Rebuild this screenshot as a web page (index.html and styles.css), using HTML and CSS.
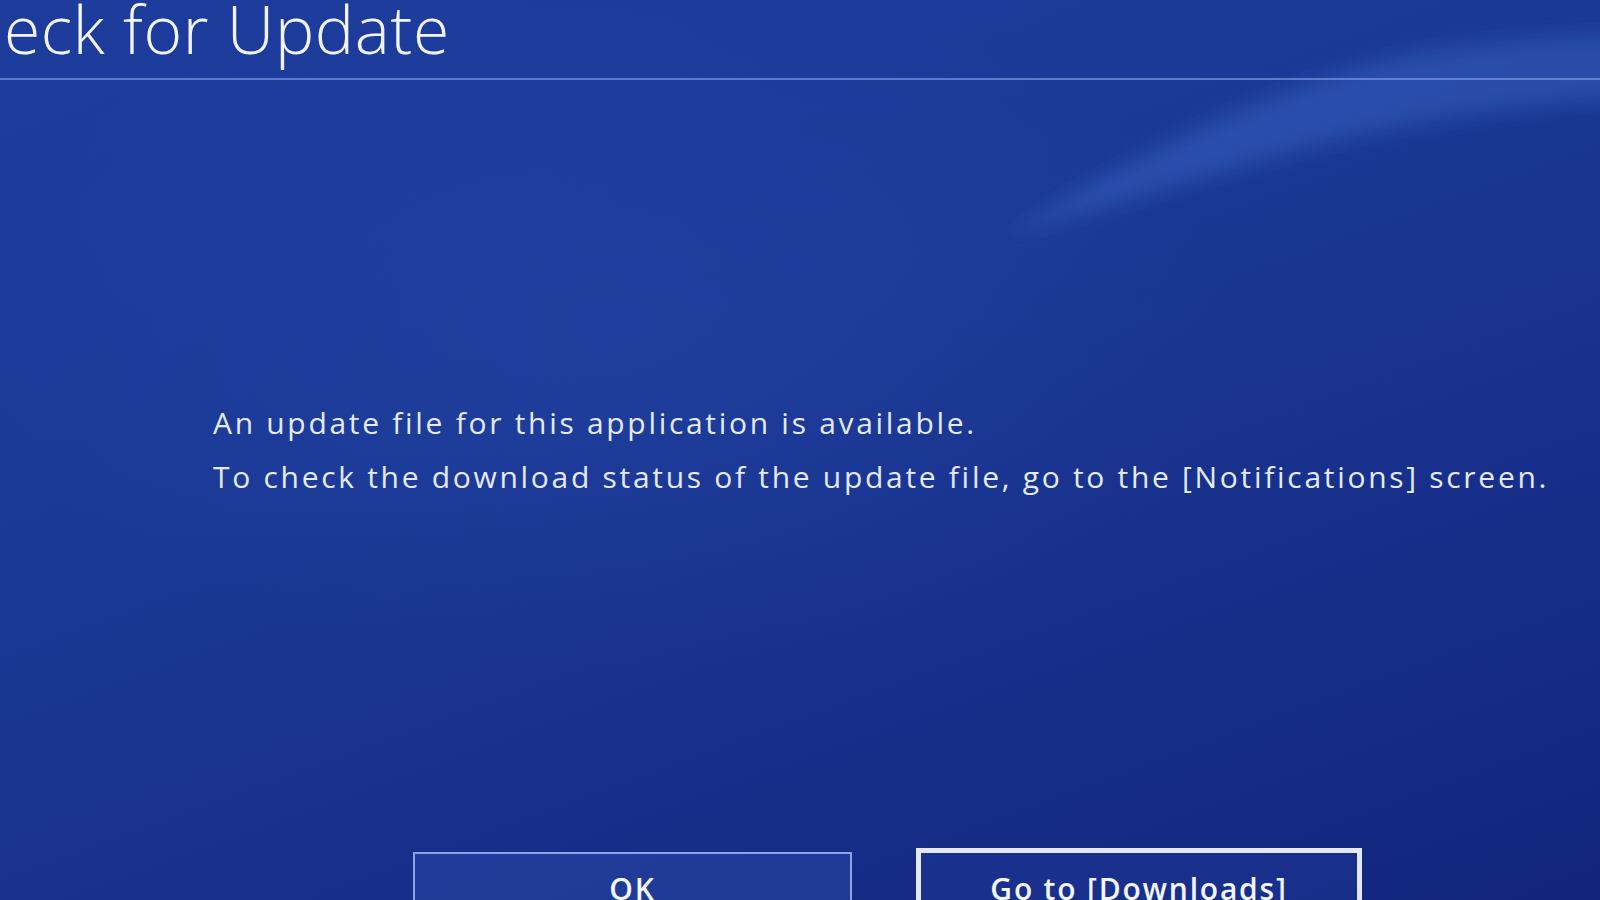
FILE: index.html
```html
<!DOCTYPE html>
<html lang="en">
<head>
    <meta charset="UTF-8">
    <meta name="viewport" content="width=device-width, initial-scale=1.0">
    <title>Check for Update</title>
    <link rel="stylesheet" href="styles.css">
</head>
<body>

    <svg class="wave" width="1600" height="900" viewBox="0 0 1600 900">
        <defs>
            <filter id="soft" x="-20%" y="-50%" width="140%" height="200%">
                <feGaussianBlur stdDeviation="10"/>
            </filter>
        </defs>
        <path d="M1005 236 C1120 160 1280 80 1420 52 C1500 40 1560 36 1620 34 L1620 100 C1520 104 1420 120 1320 145 C1210 175 1100 210 1005 236 Z"
              fill="rgba(70, 120, 210, 0.32)" filter="url(#soft)"/>
    </svg>

    <div class="screen">
        <header class="title-bar">
            <h1 class="title">eck for Update</h1>
        </header>

        <div class="message">
            <p>An update file for this application is available.</p>
            <p>To check the download status of the update file, go to the [Notifications] screen.</p>
        </div>

        <div class="buttons">
            <button class="btn">OK</button>
            <button class="btn btn-focus">Go to [Downloads]</button>
        </div>
    </div>

</body>
</html>
```

FILE: styles.css
```css
html, body {
    margin: 0;
    height: 900px;
    overflow: hidden;
}
body {
    font-family: "Open Sans", "DejaVu Sans", sans-serif;
    color: #eef2fc;
    background:
        radial-gradient(ellipse 900px 500px at 600px 320px, rgba(40, 75, 170, 0.35), transparent 70%),
        linear-gradient(160deg, #1d3c9c 0%, #1b3896 40%, #172f8a 70%, #11257c 100%);
    position: relative;
}
.wave {
    position: absolute;
    left: 0;
    top: 0;
    pointer-events: none;
}
.screen {
    position: relative;
    display: flex;
    flex-direction: column;
    height: 900px;
}
.screen > * {
    flex-shrink: 0;
}
.title-bar {
    height: 80px;
    border-bottom: 2px solid rgba(120, 150, 230, 0.7);
    box-sizing: border-box;
    overflow: hidden;
}
.title {
    margin: 0;
    margin-top: -5px;
    padding-left: 4px;
    font-size: 66px;
    font-weight: 300;
    line-height: 66px;
    letter-spacing: 0.6px;
    color: #f2f5fd;
    white-space: nowrap;
}
.message {
    margin-top: 316px;
    margin-left: 213px;
}
.message p {
    margin: 0;
    font-size: 30px;
    line-height: 54px;
    letter-spacing: 2.7px;
    white-space: nowrap;
    color: #e4eafa;
}
.buttons {
    display: flex;
    align-items: flex-start;
    margin-top: 344px;
    margin-left: 413px;
    gap: 64px;
}
.btn {
    width: 439px;
    height: 90px;
    margin-top: 4px;
    box-sizing: border-box;
    background-color: rgba(45, 75, 170, 0.45);
    border: 2px solid #8ea2e4;
    color: #f2f5fd;
    font-family: "Open Sans", "DejaVu Sans", sans-serif;
    font-size: 30px;
    font-weight: 600;
    letter-spacing: 1.8px;
    padding: 14px 0 0;
    display: flex;
    justify-content: center;
    align-items: flex-start;
}
.btn-focus {
    width: 446px;
    margin-top: 0;
    border: 5px solid #e3e9fb;
    padding-top: 15px;
    background-color: rgba(30, 55, 150, 0.5);
}
```
